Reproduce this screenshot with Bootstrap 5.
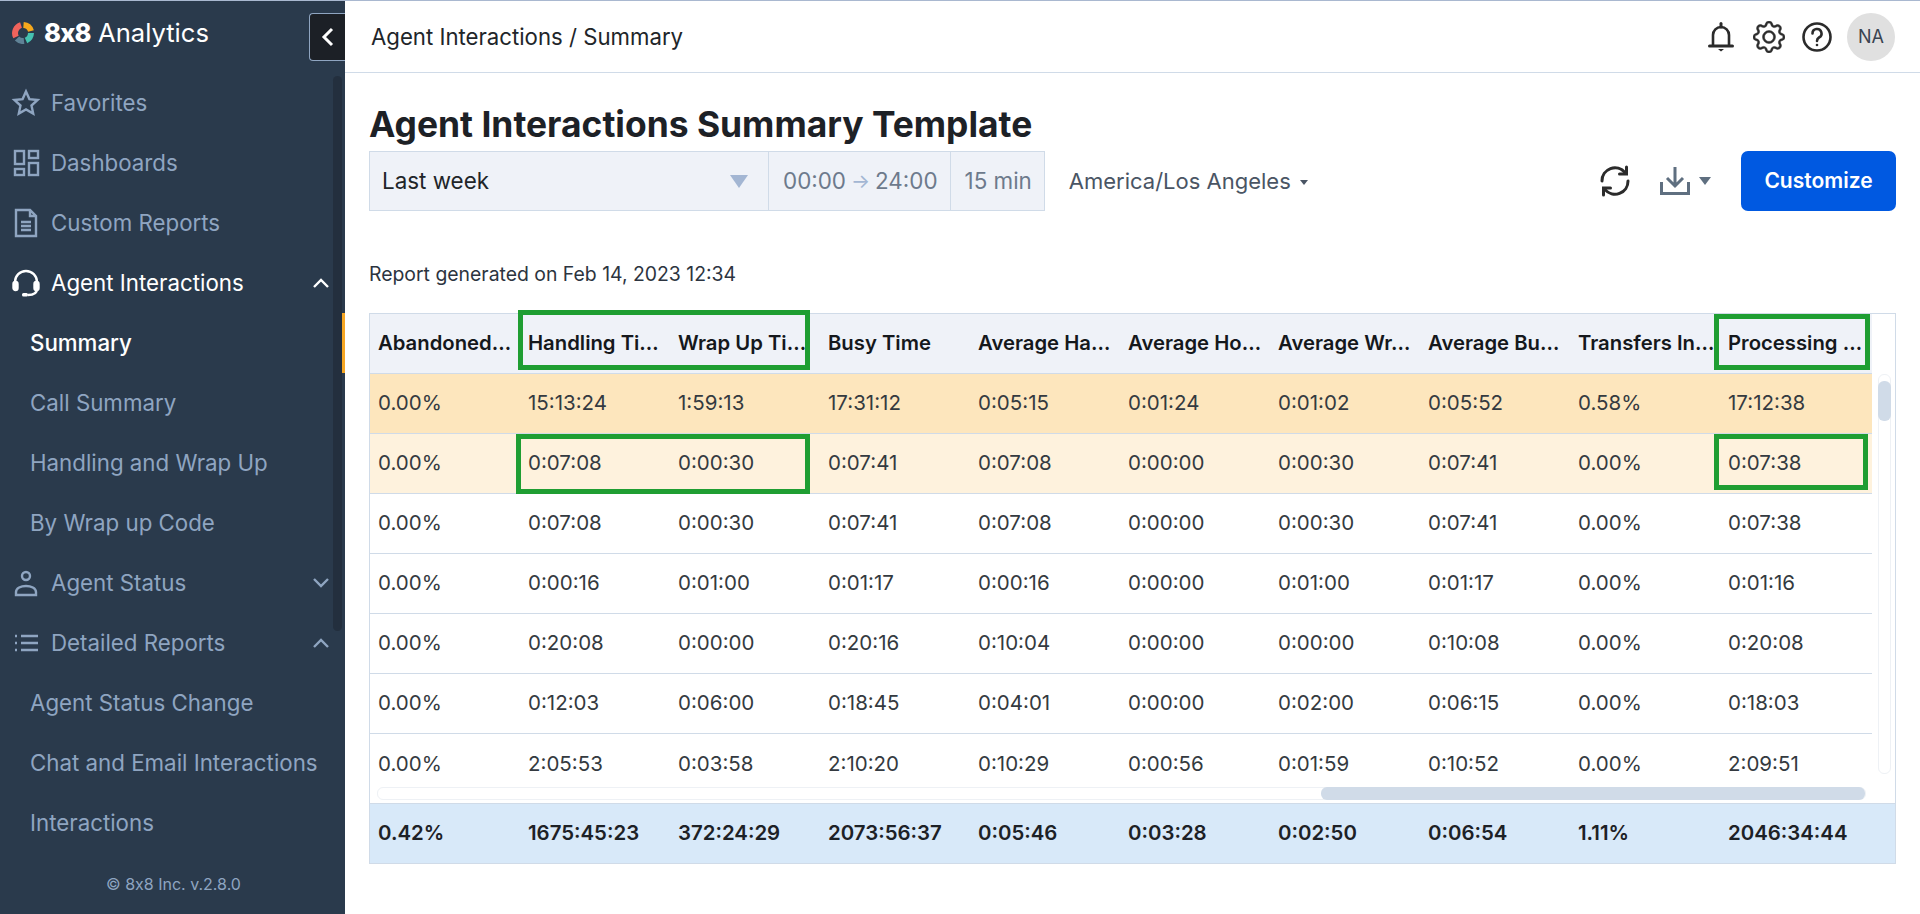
<!DOCTYPE html>
<html lang="en">
<head>
    <meta charset="UTF-8">
    <meta name="viewport" content="width=device-width, initial-scale=1">
    <title>Agent Interactions Summary</title>
    <link href="https://cdn.jsdelivr.net/npm/bootstrap@5.3.0/dist/css/bootstrap.min.css" rel="stylesheet">
    <style>
        html, body { height: 100%; overflow: hidden; }
        body { font-family: Inter, "Liberation Sans", sans-serif; color: #212529; background: #fff; }
        .app-shell { height: 914px; border-top: 1px solid #a9b8d0; }
        /* sidebar */
        .side-bar { width: 345px; background: #2a3a4c; color: #8fa5c1; position: relative; font-feature-settings: "calt" 0; }
        .side-brand { height: 72px; padding: 0 0 8px 12px; color: #fff; font-size: 25.6px; gap: 10px; }
        .side-brand b { font-weight: 800; letter-spacing: -0.8px; }
        .side-toggle { position: absolute; left: 309px; top: 12px; width: 36px; height: 48px; background: #1c2026; border: 1px solid #8fa5c1; border-right: 0; border-radius: 4px 0 0 4px; }
        .side-item { height: 60px; font-size: 22.3px; padding-left: 11px; color: #8fa5c1; white-space: nowrap; position: relative; }
        .side-item svg.ico { width: 30px; height: 30px; margin-right: 10px; flex: none; }
        .side-item.sub { padding-left: 30px; }
        .side-item.on { color: #fff; }
        .side-item.cur { color: #fff; font-weight: 500; }
        .side-item.cur::after { content: ""; position: absolute; right: 0; top: 0; bottom: 0; width: 3px; background: #f5a623; }
        .side-chev { position: absolute; left: 312px; top: 23px; width: 18px; height: 14px; }
        .side-rail { position: absolute; left: 333px; top: 75px; width: 9px; height: 555px; background: #232f3e; border-radius: 5px; }
        .side-copy { font-size: 16px; margin-top: 19px; text-align: center; padding-left: 2px; }
        /* header */
        .top-bar { height: 72px; border-bottom: 1px solid #d0dbe8; padding: 0 25px 0 26px; font-size: 22.2px; }
        .top-tools { color: #2b2b2b; }
        .ico-bell { width: 26px; height: 30px; margin-right: 19px; }
        .ico-gear { width: 32px; height: 32px; margin-right: 17px; }
        .ico-help { width: 30px; height: 30px; margin-right: 15px; }
        .avatar-dot { width: 48px; height: 48px; border-radius: 50%; background: #e0e0e0; font-size: 18px; color: #3a4350; }
        /* main */
        .page-body { padding: 0 24px 0 24px; position: relative; }
        .page-title { font-size: 35.4px; font-weight: 700; line-height: 44px; margin: 30px 0 0; color: #1d2126; }
        .filter-row { height: 60px; margin-top: 4px; }
        .filter-box { height: 60px; background: #eff2f8; border: 1px solid #d0dbe8; font-size: 22.4px; color: #212529; }
        .filter-period { width: 400px; padding: 0 20px 0 12px; }
        .filter-mid { color: #6d7a8c; padding: 0 12px 0 14px; border-left-width: 0; white-space: nowrap; }
        .filter-arrow { color: #a3b6d3; font-size: 20px; margin: 0 5px; }
        .tri-down { width: 0; height: 0; border-left: 9px solid transparent; border-right: 9px solid transparent; border-top: 13px solid #a3b6d3; }
        .tri-small { border-left-width: 6px; border-right-width: 6px; border-top-width: 8px; border-top-color: #5f6f80; margin: 0 30px 0 9px; }
        .tz-label { font-size: 22px; margin-left: 24px; color: #4a5564; }
        .tz-label i { display: inline-block; width: 0; height: 0; border-left: 4px solid transparent; border-right: 4px solid transparent; border-top: 5px solid #4a5564; margin-left: 9px; vertical-align: middle; }
        .ico-sync { width: 30px; height: 32px; margin-right: 30px; }
        .ico-down { width: 30px; height: 28px; }
        .btn-customize { width: 155px; height: 60px; background: #0059e1; border: 0; border-radius: 7px; color: #fff; font-size: 21px; font-weight: 600; }
        .report-date { font-size: 19.4px; margin: 52px 0 0; line-height: 22px; height: 22px; color: #2c3440; }
        /* report table */
        .report-wrap { position: relative; margin-top: 28px; width: 1527px; height: 551px; border: 1px solid #d0dbe8; }
        .report-grid { table-layout: fixed; width: 1502px; margin: 0; border-collapse: separate; border-spacing: 0; font-size: 20.5px; }
        .report-grid th, .report-grid td { height: 60px; padding: 0 0 0 8px; vertical-align: middle; white-space: nowrap; overflow: hidden; background: transparent; color: #343a40; font-weight: 400; border: 0; border-bottom: 1px solid #d0dbe8; }
        .report-grid th { background: #eff2f8; color: #15181c; font-weight: 600; font-size: 20.3px; }
        .report-grid col.rest { width: 150px; }
        .report-grid col.last { width: 152px; }
        .report-grid tr.row-total td { background: #fde6bd; }
        .report-grid tr.row-sel td { background: #fef2dd; }
        .report-grid tbody tr:last-child td { border-bottom: 0; }
        .report-foot { position: absolute; left: 0; right: 0; bottom: 0; height: 60px; background: #d8e9f9; border-top: 1px solid #d0dbe8; }
        .report-foot .report-grid td { background: transparent; border: 0; height: 59px; font-weight: 600; font-size: 20.4px; color: #1d2126; }
        .bar-v { position: absolute; left: 1508px; top: 60px; width: 13px; height: 400px; border: 1px solid #eef1f5; border-radius: 6px; }
        .bar-v span { display: block; width: 13px; height: 40px; background: #d0dbe8; border-radius: 6px; margin: 6px 0 0 -1px; }
        .bar-h { position: absolute; left: 7px; top: 473px; width: 1489px; height: 13px; border: 1px solid #eef1f5; border-radius: 6px; }
        .bar-h span { position: absolute; left: 943px; right: 0; top: -1px; height: 13px; background: #d0dbe8; border-radius: 6px; }
        .mark-box { position: absolute; border: 5px solid #1f9e32; pointer-events: none; }
        .mark-head { left: 148px; top: -4px; width: 292px; height: 60px; }
        .mark-row { left: 146px; top: 120px; width: 294px; height: 60px; }
        .mark-proc-head { left: 1344px; top: 0; width: 156px; height: 56px; }
        .mark-proc-row { left: 1344px; top: 120px; width: 154px; height: 56px; }
    </style>
</head>
<body>
<div class="app-shell d-flex">

    <!-- Sidebar -->
    <aside class="side-bar flex-shrink-0">
        <div class="side-brand d-flex align-items-center">
            <svg width="22" height="22" viewBox="0 0 22 22" fill="none" stroke-width="6">
                <path d="M4 15 A8.500 8.500 0 0 1 9 3" stroke="#f0635c"/>
                <path d="M11.500 3 A8.500 8.500 0 0 1 19 9" stroke="#f5a81c"/>
                <path d="M19 11 A8.500 8.500 0 0 1 14 18.500" stroke="#45c2b1"/>
                <path d="M12 19 A8.500 8.500 0 0 1 5 16.500" stroke="#5f8296"/>
            </svg>
            <span><b>8x8</b> Analytics</span>
        </div>
        <div class="side-toggle d-flex align-items-center justify-content-center">
            <svg width="14" height="20" viewBox="0 0 14 20" fill="none" stroke="#fff" stroke-width="3"><path d="M11 2 3 10l8 8"/></svg>
        </div>
        <div class="side-rail"></div>

        <div class="side-item d-flex align-items-center">
            <svg class="ico" viewBox="0 0 30 30" fill="none" stroke="#8fa5c1" stroke-width="2.400"><path d="M15 3.500l3.400 7.600 8.200.9-6.100 5.500 1.700 8.100-7.200-4.100-7.200 4.100 1.700-8.100L3.400 12l8.200-.9z"/></svg>
            Favorites
        </div>
        <div class="side-item d-flex align-items-center">
            <svg class="ico" viewBox="0 0 30 30" fill="none" stroke="#8fa5c1" stroke-width="2.400"><rect x="4" y="3" width="9" height="13"/><rect x="18" y="3" width="9" height="7"/><rect x="4" y="21" width="9" height="6"/><rect x="18" y="15" width="9" height="12"/></svg>
            Dashboards
        </div>
        <div class="side-item d-flex align-items-center">
            <svg class="ico" viewBox="0 0 30 30" fill="none" stroke="#8fa5c1" stroke-width="2.400"><path d="M5 2h14l6 6v20H5zM19 2v6h6"/><path d="M10 14h10M10 18h10M10 22h10"/></svg>
            Custom Reports
        </div>
        <div class="side-item on d-flex align-items-center">
            <svg class="ico" viewBox="0 0 30 30" fill="none" stroke="#fff" stroke-width="2.400"><path d="M4 19v-5a11 11 0 0 1 22 0v5"/><rect x="2.500" y="14" width="4" height="8" rx="2" fill="#fff"/><rect x="23.500" y="14" width="4" height="8" rx="2" fill="#fff"/><path d="M26 21c0 4-3 6-9 6"/><rect x="11" y="25" width="6" height="3.500" rx="1.500" fill="#fff" stroke="none"/></svg>
            Agent Interactions
            <svg class="side-chev" viewBox="0 0 18 14" fill="none" stroke="#fff" stroke-width="2.400"><path d="M2 11l7-7 7 7"/></svg>
        </div>
        <div class="side-item sub cur d-flex align-items-center">Summary</div>
        <div class="side-item sub d-flex align-items-center">Call Summary</div>
        <div class="side-item sub d-flex align-items-center">Handling and Wrap Up</div>
        <div class="side-item sub d-flex align-items-center">By Wrap up Code</div>
        <div class="side-item d-flex align-items-center">
            <svg class="ico" viewBox="0 0 30 30" fill="none" stroke="#8fa5c1" stroke-width="2.400"><circle cx="15" cy="8" r="4"/><path d="M5 27v-3c0-4 5-6 10-6s10 2 10 6v3z"/></svg>
            Agent Status
            <svg class="side-chev" viewBox="0 0 18 14" fill="none" stroke="#8fa5c1" stroke-width="2.400"><path d="M2 3l7 7 7-7"/></svg>
        </div>
        <div class="side-item d-flex align-items-center">
            <svg class="ico" viewBox="0 0 30 30" fill="none" stroke="#8fa5c1" stroke-width="2.400"><path d="M10 8h17M10 15h17M10 22h17"/><path d="M4 8h2M4 15h2M4 22h2"/></svg>
            Detailed Reports
            <svg class="side-chev" viewBox="0 0 18 14" fill="none" stroke="#8fa5c1" stroke-width="2.400"><path d="M2 11l7-7 7 7"/></svg>
        </div>
        <div class="side-item sub d-flex align-items-center">Agent Status Change</div>
        <div class="side-item sub d-flex align-items-center">Chat and Email Interactions</div>
        <div class="side-item sub d-flex align-items-center">Interactions</div>
        <div class="side-copy">© 8x8 Inc. v.2.8.0</div>
    </aside>

    <!-- Contenido -->
    <main class="flex-grow-1">
        <header class="top-bar d-flex align-items-center justify-content-between">
            <div>Agent Interactions / Summary</div>
            <div class="top-tools d-flex align-items-center">
                <svg class="ico-bell" viewBox="0 0 26 30" fill="none" stroke="currentColor" stroke-width="2.600"><path d="M5 23V13a8 8 0 0 1 16 0v10"/><path d="M1.500 24h23" stroke-linecap="round" stroke-width="3"/><path d="M13 1.500V5" stroke-linecap="round" stroke-width="3"/><path d="M10 27h6l-3 2.500z" fill="currentColor" stroke="none"/></svg>
                <svg class="ico-gear" viewBox="0 0 16 16" fill="currentColor" stroke="currentColor" stroke-width=".25"><path d="M8 4.754a3.246 3.246 0 1 0 0 6.492 3.246 3.246 0 0 0 0-6.492zM5.754 8a2.246 2.246 0 1 1 4.492 0 2.246 2.246 0 0 1-4.492 0z"/><path d="M9.796 1.343c-.527-1.79-3.065-1.79-3.592 0l-.094.319a.873.873 0 0 1-1.255.52l-.292-.16c-1.64-.892-3.433.902-2.54 2.541l.159.292a.873.873 0 0 1-.52 1.255l-.319.094c-1.79.527-1.79 3.065 0 3.592l.319.094a.873.873 0 0 1 .52 1.255l-.16.292c-.892 1.64.901 3.434 2.541 2.54l.292-.159a.873.873 0 0 1 1.255.52l.094.319c.527 1.79 3.065 1.79 3.592 0l.094-.319a.873.873 0 0 1 1.255-.52l.292.16c1.64.893 3.434-.902 2.54-2.541l-.159-.292a.873.873 0 0 1 .52-1.255l.319-.094c1.79-.527 1.79-3.065 0-3.592l-.319-.094a.873.873 0 0 1-.52-1.255l.16-.292c.893-1.64-.902-3.433-2.541-2.54l-.292.159a.873.873 0 0 1-1.255-.52l-.094-.319zm-2.633.283c.246-.835 1.428-.835 1.674 0l.094.319a1.873 1.873 0 0 0 2.693 1.115l.291-.16c.764-.415 1.6.42 1.184 1.185l-.159.292a1.873 1.873 0 0 0 1.116 2.692l.318.094c.835.246.835 1.428 0 1.674l-.319.094a1.873 1.873 0 0 0-1.115 2.693l.16.291c.415.764-.42 1.6-1.185 1.184l-.291-.159a1.873 1.873 0 0 0-2.693 1.116l-.094.318c-.246.835-1.428.835-1.674 0l-.094-.319a1.873 1.873 0 0 0-2.692-1.115l-.292.16c-.764.415-1.6-.42-1.184-1.185l.159-.291A1.873 1.873 0 0 0 1.945 8.93l-.319-.094c-.835-.246-.835-1.428 0-1.674l.319-.094A1.873 1.873 0 0 0 3.06 4.377l-.16-.292c-.415-.764.42-1.6 1.185-1.184l.292.159a1.873 1.873 0 0 0 2.692-1.115l.094-.319z"/></svg>
                <svg class="ico-help" viewBox="0 0 30 30" fill="none" stroke="currentColor" stroke-width="2.600"><circle cx="15" cy="15" r="13.500"/><path d="M10.500 11.500a4.500 4.500 0 1 1 6.500 4c-1.500.8-2 1.500-2 3.500" stroke-linecap="round"/><circle cx="15" cy="23" r="1.300" fill="currentColor" stroke="none"/></svg>
                <div class="avatar-dot d-flex align-items-center justify-content-center">NA</div>
            </div>
        </header>

        <div class="page-body">
            <h1 class="page-title">Agent Interactions Summary Template</h1>

            <div class="filter-row d-flex align-items-center">
                <div class="filter-box filter-period d-flex align-items-center justify-content-between">
                    <span>Last week</span><span class="tri-down"></span>
                </div>
                <div class="filter-box filter-mid d-flex align-items-center">00:00<span class="filter-arrow">→</span>24:00</div>
                <div class="filter-box filter-mid d-flex align-items-center">15 min</div>
                <div class="tz-label">America/Los Angeles<i></i></div>

                <div class="ms-auto d-flex align-items-center">
                    <svg class="ico-sync" viewBox="0 0 30 32" fill="none" stroke="#2b2b2b" stroke-width="3" stroke-linecap="round"><path d="M2 16A13 13 0 0 1 25 7.500"/><path d="M28 16A13 13 0 0 1 5 24.500"/><path d="M26.500 2v7h-7M3.500 30v-7h7"/></svg>
                    <svg class="ico-down" viewBox="0 0 30 28" fill="none" stroke="#5f6f80" stroke-width="3"><path d="M15 0v18M7 11l8 8 8-8"/><path d="M1.500 15v11.500h27V15"/></svg>
                    <span class="tri-down tri-small"></span>
                    <button class="btn-customize" type="button">Customize</button>
                </div>
            </div>

            <p class="report-date">Report generated on Feb 14, 2023 12:34</p>

            <div class="report-wrap" id="tablaWrap">
                <table class="report-grid" id="tablaReporte"></table>
                <div class="bar-v"><span></span></div>
                <div class="bar-h"><span></span></div>
                <div class="report-foot"><table class="report-grid" id="tablaTotal"></table></div>
                <div class="mark-box mark-head"></div>
                <div class="mark-box mark-row"></div>
                <div class="mark-box mark-proc-head"></div>
                <div class="mark-box mark-proc-row"></div>
            </div>
        </div>
    </main>
</div>

<script>
    const cols = ["Abandoned…", "Handling Ti…", "Wrap Up Ti…", "Busy Time", "Average Ha…", "Average Ho…", "Average Wr…", "Average Bu…", "Transfers In…", "Processing …"];
    const rows = [
        ["0.00%","15:13:24","1:59:13","17:31:12","0:05:15","0:01:24","0:01:02","0:05:52","0.58%","17:12:38"],
        ["0.00%","0:07:08","0:00:30","0:07:41","0:07:08","0:00:00","0:00:30","0:07:41","0.00%","0:07:38"],
        ["0.00%","0:07:08","0:00:30","0:07:41","0:07:08","0:00:00","0:00:30","0:07:41","0.00%","0:07:38"],
        ["0.00%","0:00:16","0:01:00","0:01:17","0:00:16","0:00:00","0:01:00","0:01:17","0.00%","0:01:16"],
        ["0.00%","0:20:08","0:00:00","0:20:16","0:10:04","0:00:00","0:00:00","0:10:08","0.00%","0:20:08"],
        ["0.00%","0:12:03","0:06:00","0:18:45","0:04:01","0:00:00","0:02:00","0:06:15","0.00%","0:18:03"],
        ["0.00%","2:05:53","0:03:58","2:10:20","0:10:29","0:00:56","0:01:59","0:10:52","0.00%","2:09:51"]
    ];
    const total = ["0.42%","1675:45:23","372:24:29","2073:56:37","0:05:46","0:03:28","0:02:50","0:06:54","1.11%","2046:34:44"];
    const colgroup = '<colgroup>' + '<col class="rest">'.repeat(9) + '<col class="last"></colgroup>';
    const clases = ["row-total", "row-sel"];

    let html = colgroup + '<thead><tr>' + cols.map(c => `<th>${c}</th>`).join("") + '</tr></thead><tbody>';
    rows.forEach((r, i) => {
        html += `<tr class="${clases[i] || ""}">` + r.map(v => `<td>${v}</td>`).join("") + '</tr>';
    });
    document.getElementById("tablaReporte").innerHTML = html + '</tbody>';
    document.getElementById("tablaTotal").innerHTML = colgroup + '<tr>' + total.map(v => `<td>${v}</td>`).join("") + '</tr>';
</script>
<script src="https://cdn.jsdelivr.net/npm/bootstrap@5.3.0/dist/js/bootstrap.bundle.min.js"></script>
</body>
</html>
